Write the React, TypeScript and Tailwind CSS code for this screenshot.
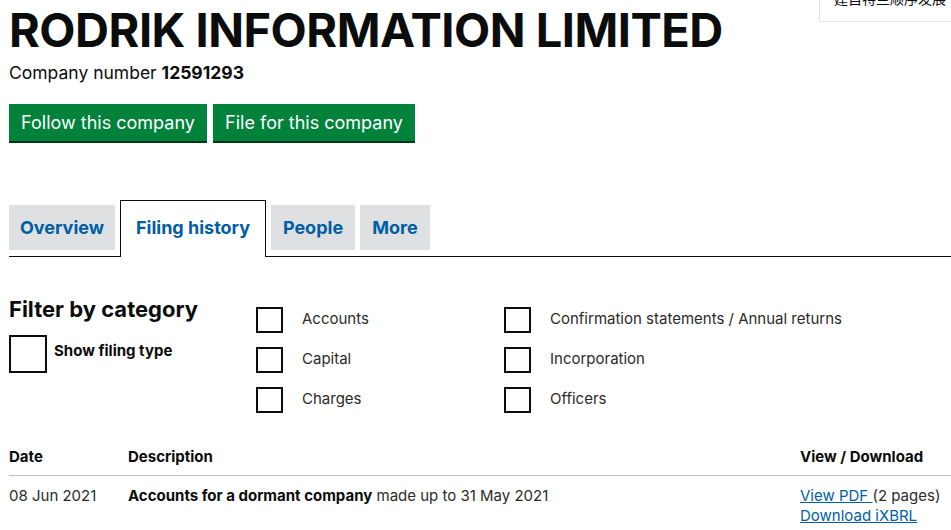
import React from "react"

const font = { fontFamily: "Inter, 'Noto Sans', sans-serif" }

function Box({ size }: { size: "sm" | "lg" }) {
  return (
    <span
      className={
        size === "lg"
          ? "inline-block w-[38px] h-[38px] border-2 border-[#0b0c0c] bg-white shrink-0"
          : "inline-block w-[27px] h-[26px] border-2 border-[#0b0c0c] bg-white shrink-0"
      }
    />
  )
}

function Category({ label }: { label: string }) {
  return (
    <label className="flex items-center h-[26px] text-[15px] text-[#2b2b2b]">
      <Box size="sm" />
      <span className="ml-[19px]">{label}</span>
    </label>
  )
}

export default function App() {
  return (
    <div className="relative w-[951px] h-[530px] overflow-hidden bg-white text-[#0b0c0c]" style={font}>
      {/* cropped translate popup */}
      <div className="absolute right-0 top-0 w-[132px] h-[22px] border-l border-b border-[#e3e3e3] bg-white overflow-hidden">
        <div className="absolute left-[14px] top-[-12px] text-[14px] whitespace-nowrap" style={{ fontFamily: "'Noto Sans CJK SC', sans-serif" }}>
          建自特兰顺序发展
        </div>
      </div>

      <div className="pl-[9px]">
        <h1 className="text-[47px] font-bold leading-none pt-[6px] tracking-[-0.5px]">RODRIK INFORMATION LIMITED</h1>
        <p className="mt-[11px] text-[17.5px] leading-none">
          Company number <strong className="font-bold">12591293</strong>
        </p>

        <div className="flex gap-[6px] mt-[22px]">
          <button className="w-[198px] h-[37px] bg-[#00823b] text-white text-[18px] shadow-[0_2px_0_#003618]">Follow this company</button>
          <button className="w-[202px] h-[37px] bg-[#00823b] text-white text-[18px] shadow-[0_2px_0_#003618]">File for this company</button>
        </div>

        <div className="mt-[59px] flex items-end border-b border-[#0b0c0c] text-[18px] font-bold text-[#005ea5]">
          <div className="w-[106px] h-[45px] bg-[#dee0e2] flex items-center justify-center mb-[6px]">Overview</div>
          <div className="ml-[5px] w-[146px] h-[57px] border border-b-0 border-[#0b0c0c] bg-white flex items-center justify-center -mb-px pb-[3px]">Filing history</div>
          <div className="ml-[5px] w-[84px] h-[45px] bg-[#dee0e2] flex items-center justify-center mb-[6px]">People</div>
          <div className="ml-[5px] w-[70px] h-[45px] bg-[#dee0e2] flex items-center justify-center mb-[6px]">More</div>
        </div>

        <div className="flex mt-[41px]">
          <div className="w-[247px]">
            <h2 className="text-[22px] font-bold leading-none">Filter by category</h2>
            <label className="flex items-start mt-[15px]">
              <Box size="lg" />
              <span className="ml-[7px] mt-[5px] text-[15px] font-bold">Show filing type</span>
            </label>
          </div>
          <div className="w-[248px] flex flex-col gap-[14px] mt-[9px]">
            <Category label="Accounts" />
            <Category label="Capital" />
            <Category label="Charges" />
          </div>
          <div className="flex flex-col gap-[14px] mt-[9px]">
            <Category label="Confirmation statements / Annual returns" />
            <Category label="Incorporation" />
            <Category label="Officers" />
          </div>
        </div>

        <table className="mt-[34px] w-[942px] text-[15px] border-collapse">
          <thead>
            <tr className="border-b border-[#bfc1c3] text-left">
              <th className="font-bold w-[119px] pb-[8px] leading-[20px]">Date</th>
              <th className="font-bold pb-[8px] leading-[20px]">Description</th>
              <th className="font-bold w-[151px] pb-[8px] leading-[20px]">View / Download</th>
            </tr>
          </thead>
          <tbody>
            <tr className="align-top text-[#2b2b2b]">
              <td className="pt-[10px] leading-[20px]">08 Jun 2021</td>
              <td className="pt-[10px] leading-[20px]">
                <strong className="font-bold text-[#0b0c0c]">Accounts for a dormant company</strong> made up to 31 May 2021
              </td>
              <td className="pt-[10px] leading-[20px]">
                <a className="text-[#005ea5] underline">View PDF </a>(2 pages)
                <br />
                <a className="text-[#005ea5] underline">Download iXBRL</a>
              </td>
            </tr>
          </tbody>
        </table>
      </div>
    </div>
  )
}
